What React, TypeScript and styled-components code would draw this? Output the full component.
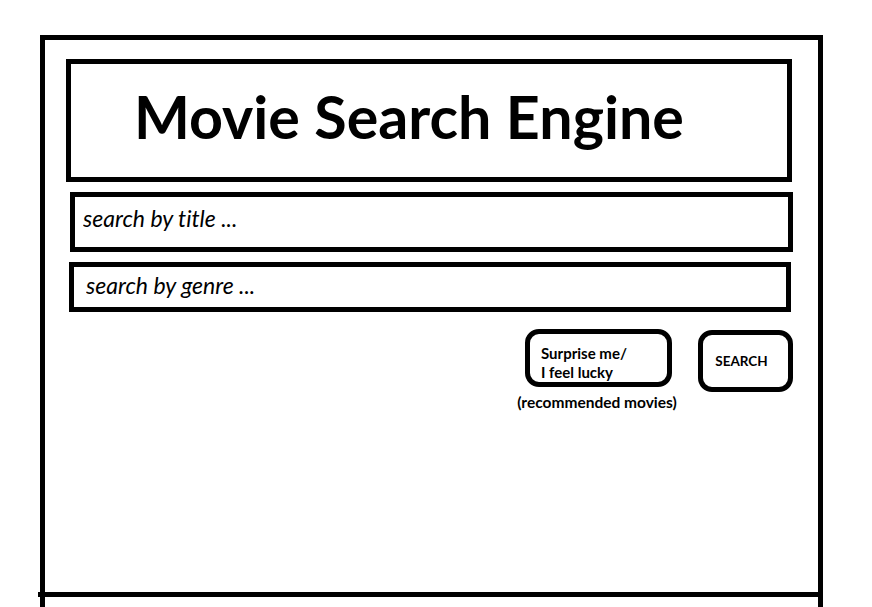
import React from "react";
import styled, { createGlobalStyle } from "styled-components";

const Global = createGlobalStyle`
  html, body { margin: 0; padding: 0; background: #fff; overflow: hidden; }
  body { font-family: Lato, "Open Sans", sans-serif; color: #000; font-variant-ligatures: none; }
  * { box-sizing: border-box; }
`;

const Frame = styled.div`
  margin: 35px 0 0 40px;
  width: 783px;
  height: 572px;
  border: 5px solid #000;
  border-bottom: none;
  display: flex;
  flex-direction: column;
  align-items: flex-start;
`;

const TitleBox = styled.header`
  margin: 19px 0 0 21px;
  width: 726px;
  height: 123px;
  border: 5px solid #000;
  display: flex;
  align-items: center;
  padding: 0 0 8px 63px;
`;

const Title = styled.h1`
  margin: 0;
  font-family: Lato, sans-serif;
  font-weight: 700;
  font-size: 59.2px;
  line-height: 1;
  letter-spacing: 0;
`;

const Field = styled.input<{ $left: number; $width: number; $height: number; $pad: number; $top: number; $lift: number }>`
  display: block;
  margin: ${(p) => p.$top}px 0 0 ${(p) => p.$left}px;
  width: ${(p) => p.$width}px;
  height: ${(p) => p.$height}px;
  border: 5px solid #000;
  border-radius: 0;
  padding: 0 0 ${(p) => p.$lift}px ${(p) => p.$pad}px;
  font-family: Lato, sans-serif;
  font-style: italic;
  font-size: 23px;
  font-variant-ligatures: none;
  color: #000;
  background: #fff;
  outline: none;
  &::placeholder { color: #000; opacity: 1; }
`;

const ButtonRow = styled.div`
  align-self: stretch;
  margin-top: 17px;
  padding-right: 25px;
  display: flex;
  justify-content: flex-end;
  align-items: flex-start;
  gap: 26px;
`;

const LuckyGroup = styled.div`
  width: 147px;
  display: flex;
  flex-direction: column;
  align-items: center;
`;

const PillButton = styled.button<{ $width: number; $height: number }>`
  flex: none;
  width: ${(p) => p.$width}px;
  height: ${(p) => p.$height}px;
  border: 5px solid #000;
  border-radius: 14px;
  background: #fff;
  color: #000;
  font-family: Lato, sans-serif;
  font-weight: 700;
  cursor: pointer;
`;

const LuckyButton = styled(PillButton)`
  text-align: left;
  font-size: 15px;
  line-height: 19px;
  padding: 9px 0 0 11px;
`;

const SearchButton = styled(PillButton)`
  margin-top: 1px;
  font-size: 13.5px;
  padding: 0 8px 0 0;
`;

const Caption = styled.div`
  margin-top: 6px;
  margin-left: -3px;
  white-space: nowrap;
  font-family: Lato, sans-serif;
  font-weight: 700;
  font-size: 15.5px;
  line-height: 19px;
`;

const BottomRule = styled.div`
  align-self: stretch;
  margin: auto -5px 10px -7px;
  height: 5px;
  background: #000;
`;

export default function App() {
  return (
    <>
      <Global />
      <Frame>
        <TitleBox>
          <Title>Movie Search Engine</Title>
        </TitleBox>
        <Field $top={10} $left={25} $width={723} $height={60} $pad={8} $lift={9} placeholder="search by title ..." />
        <Field $top={10} $left={24} $width={722} $height={50} $pad={12} $lift={4} placeholder="search by genre ..." />
        <ButtonRow>
          <LuckyGroup>
            <LuckyButton $width={147} $height={58}>
              Surprise me/
              <br />I feel lucky
            </LuckyButton>
            <Caption>(recommended movies)</Caption>
          </LuckyGroup>
          <SearchButton $width={95} $height={62}>SEARCH</SearchButton>
        </ButtonRow>
        <BottomRule />
      </Frame>
    </>
  );
}
